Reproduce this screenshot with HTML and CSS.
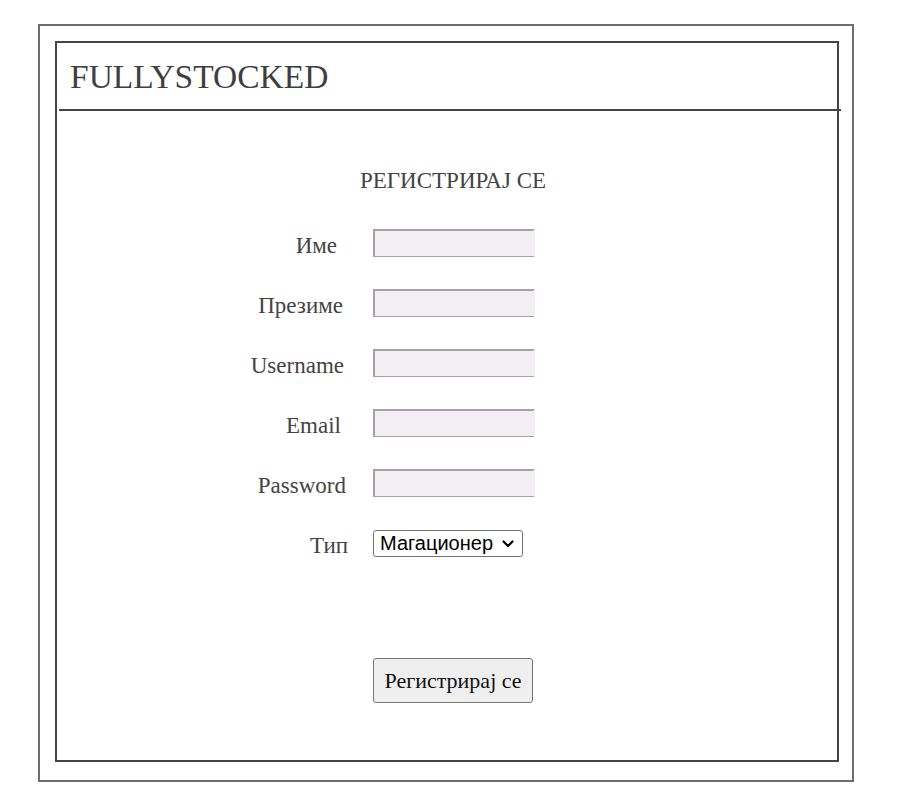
FILE: index.html
```html
<!DOCTYPE html>
<html lang="mk">
<head>
<meta charset="utf-8">
<title>FULLYSTOCKED</title>
<link rel="stylesheet" href="styles.css">
</head>
<body>
<div class="outer">
  <div class="inner">
    <header class="header">
      <h1 class="brand">FULLYSTOCKED</h1>
    </header>
    <hr class="rule">
    <main class="content">
      <h2 class="form-title">РЕГИСТРИРАЈ СЕ</h2>
      <form class="form">
        <label class="label label-ime" for="ime">Име</label>
        <input class="field" id="ime" type="text">
        <label class="label label-prezime" for="prezime">Презиме</label>
        <input class="field" id="prezime" type="text">
        <label class="label label-username" for="username">Username</label>
        <input class="field" id="username" type="text">
        <label class="label label-email" for="email">Email</label>
        <input class="field" id="email" type="text">
        <label class="label label-password" for="password">Password</label>
        <input class="field" id="password" type="password">
        <label class="label label-tip" for="tip">Тип</label>
        <span class="select-wrap">
          <select class="select" id="tip">
            <option>Магационер</option>
          </select>
          <svg class="chevron" width="12" height="8" viewBox="0 0 12 8" aria-hidden="true">
            <path d="M1.5 1.5 L6 6 L10.5 1.5" fill="none" stroke="#000" stroke-width="2.2" stroke-linecap="round" stroke-linejoin="round"/>
          </svg>
        </span>
        <span class="spacer"></span>
        <button class="submit" type="button">Регистрирај се</button>
      </form>
    </main>
  </div>
</div>
</body>
</html>
```
FILE: styles.css
```css
html, body {
  margin: 0;
  padding: 0;
  background: #ffffff;
}

body {
  font-family: "Liberation Serif", "Times New Roman", serif;
  color: #444444;
}

.outer {
  box-sizing: border-box;
  margin: 24px 0 0 38px;
  width: 816px;
  height: 758px;
  border: 2px solid #6e6e6e;
  padding: 15px 15px 18px 15px;
}

.inner {
  box-sizing: border-box;
  height: 100%;
  width: 784px;
  border: 2px solid #444444;
}

.header {
  padding: 15px 0 0 13px;
}

.brand {
  margin: 0;
  font-size: 33.5px;
  font-weight: normal;
  line-height: 38px;
  color: #3f3f3f;
}

.rule {
  margin: 13px 0 0 2px;
  width: 782px;
  height: 2px;
  border: 0;
  background: #444444;
}

.content {
  padding-top: 57px;
}

.form-title {
  margin: 0;
  padding-left: 12px;
  text-align: center;
  font-size: 23px;
  font-weight: normal;
  line-height: 26px;
  color: #444444;
}

.form {
  display: grid;
  grid-template-columns: 288px 162px;
  column-gap: 28px;
  row-gap: 32px;
  align-items: center;
  margin-top: 35px;
}

.label {
  justify-self: end;
  padding-top: 6px;
  font-size: 23px;
  line-height: 22px;
  color: #444444;
}

.label-ime { margin-right: 8px; }
.label-prezime { margin-right: 2px; }
.label-username { margin-right: 1px; }
.label-email { margin-right: 4px; }
.label-password { margin-right: -1px; }
.label-tip { margin-right: -3px; }

.field {
  box-sizing: border-box;
  width: 162px;
  height: 28px;
  margin: 0;
  padding: 0 4px;
  border: 2px solid #a3a3a3;
  border-right-color: #f2eef4;
  border-bottom-width: 1px;
  background: #f2eef4;
  outline: none;
}

.select-wrap {
  position: relative;
  display: block;
  width: 150px;
  height: 27px;
}

.select {
  box-sizing: border-box;
  display: block;
  width: 150px;
  height: 27px;
  margin: 0;
  padding: 0 24px 0 6px;
  border: 1px solid #767676;
  border-radius: 3px;
  background: #ffffff;
  font-family: "Liberation Sans", Arial, sans-serif;
  font-size: 20px;
  color: #000000;
  appearance: none;
  -webkit-appearance: none;
}

.chevron {
  position: absolute;
  right: 9px;
  top: 10px;
  pointer-events: none;
}

.spacer {
  grid-column: 1 / -1;
  height: 37px;
}

.submit {
  grid-column: 2;
  box-sizing: border-box;
  width: 160px;
  height: 45px;
  margin: 0;
  padding: 0;
  border: 1px solid #767676;
  border-radius: 3px;
  background: #efefef;
  font-family: "Liberation Serif", "Times New Roman", serif;
  font-size: 22px;
  color: #111111;
}
```
